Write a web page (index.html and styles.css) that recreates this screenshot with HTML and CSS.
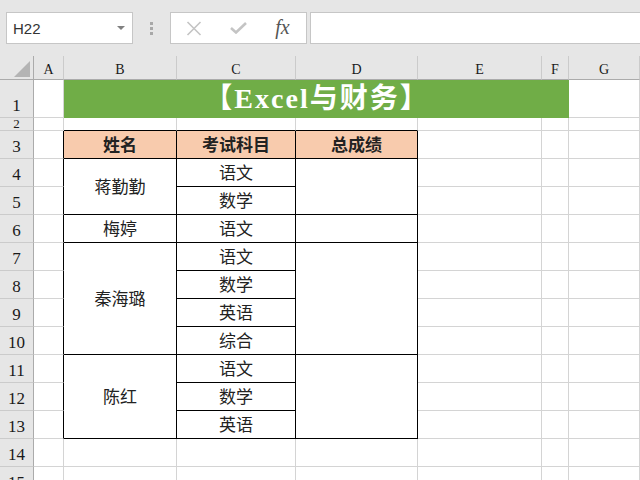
FILE: index.html
```html
<!DOCTYPE html>
<html lang="zh-CN">
<head>
<meta charset="utf-8">
<title>Excel与财务</title>
<link rel="stylesheet" href="styles.css">
</head>
<body>
<div class="app">
  <div class="toolbar">
    <div class="namebox"><span class="ref">H22</span><span class="caret"></span></div>
    <div class="grip"><i></i><i></i><i></i></div>
    <div class="btnbox">
      <div class="slot">
        <svg width="16" height="15" viewBox="0 0 16 15"><path d="M1.5 1 L14.5 14 M14.5 1 L1.5 14" stroke="#c4c4c4" stroke-width="1.6" fill="none"/></svg>
      </div>
      <div class="slot">
        <svg width="17" height="12" viewBox="0 0 17 12"><path d="M1 6 L6 10.5 L16 1" stroke="#c4c4c4" stroke-width="2.6" fill="none"/></svg>
      </div>
      <div class="slot"><span class="fx">fx</span></div>
    </div>
    <div class="formula"></div>
  </div>

  <div class="sheet">
    <div class="corner"><svg width="34" height="24" viewBox="0 0 34 24"><polygon points="14,21 30,21 30,5" fill="#b4b4b4"/></svg></div>
    <div class="ch">A</div><div class="ch">B</div><div class="ch">C</div><div class="ch">D</div><div class="ch">E</div><div class="ch">F</div><div class="ch">G</div>

    <div class="rh">1</div><div class="c"></div><div class="c title">【Excel与财务】</div><div class="c"></div>

    <div class="rh rh-thin">2</div><div class="c"></div><div class="c tt"></div><div class="c tt"></div><div class="c tt"></div><div class="c"></div><div class="c"></div><div class="c"></div>

    <div class="rh">3</div><div class="c tl"></div><div class="c tb hd">姓名</div><div class="c tb hd">考试科目</div><div class="c tb hd">总成绩</div><div class="c"></div><div class="c"></div><div class="c"></div>

    <div class="rh">4</div><div class="c tl"></div><div class="c tb r2">蒋勤勤</div><div class="c tb">语文</div><div class="c tb r2"></div><div class="c"></div><div class="c"></div><div class="c"></div>
    <div class="rh">5</div><div class="c tl"></div><div class="c tb">数学</div><div class="c"></div><div class="c"></div><div class="c"></div>

    <div class="rh">6</div><div class="c tl"></div><div class="c tb">梅婷</div><div class="c tb">语文</div><div class="c tb"></div><div class="c"></div><div class="c"></div><div class="c"></div>

    <div class="rh">7</div><div class="c tl"></div><div class="c tb r4">秦海璐</div><div class="c tb">语文</div><div class="c tb r4"></div><div class="c"></div><div class="c"></div><div class="c"></div>
    <div class="rh">8</div><div class="c tl"></div><div class="c tb">数学</div><div class="c"></div><div class="c"></div><div class="c"></div>
    <div class="rh">9</div><div class="c tl"></div><div class="c tb">英语</div><div class="c"></div><div class="c"></div><div class="c"></div>
    <div class="rh">10</div><div class="c tl"></div><div class="c tb">综合</div><div class="c"></div><div class="c"></div><div class="c"></div>

    <div class="rh">11</div><div class="c tl"></div><div class="c tb r3">陈红</div><div class="c tb">语文</div><div class="c tb r3"></div><div class="c"></div><div class="c"></div><div class="c"></div>
    <div class="rh">12</div><div class="c tl"></div><div class="c tb">数学</div><div class="c"></div><div class="c"></div><div class="c"></div>
    <div class="rh">13</div><div class="c tl"></div><div class="c tb">英语</div><div class="c"></div><div class="c"></div><div class="c"></div>

    <div class="rh">14</div><div class="c"></div><div class="c"></div><div class="c"></div><div class="c"></div><div class="c"></div><div class="c"></div><div class="c"></div>
    <div class="rh">15</div><div class="c"></div><div class="c"></div><div class="c"></div><div class="c"></div><div class="c"></div><div class="c"></div><div class="c"></div>
  </div>
</div>
</body>
</html>
```

FILE: styles.css
```css
* { box-sizing: border-box; }
html, body { margin: 0; padding: 0; }
body {
  width: 640px;
  height: 480px;
  overflow: hidden;
  background: #e6e6e6;
}
.app {
  width: 640px;
  height: 480px;
  overflow: hidden;
  display: flex;
  flex-direction: column;
}

/* toolbar */
.toolbar {
  height: 56px;
  flex: none;
  display: flex;
  align-items: flex-start;
  padding: 12px 0 0 6px;
  background: #e6e6e6;
  overflow: hidden;
}
.namebox {
  width: 127px;
  height: 32px;
  background: #fff;
  border: 1px solid #c6c6c6;
  display: flex;
  align-items: center;
  justify-content: space-between;
  padding: 0 7px 0 6px;
  flex: none;
}
.ref {
  font-family: "Liberation Sans", Arial, sans-serif;
  font-size: 15px;
  color: #333;
  padding-top: 1px;
}
.caret {
  width: 0;
  height: 0;
  border-left: 4px solid transparent;
  border-right: 4px solid transparent;
  border-top: 4px solid #808080;
}
.grip {
  width: 37px;
  height: 32px;
  flex: none;
  display: flex;
  flex-direction: column;
  align-items: center;
  justify-content: center;
  gap: 2px;
  padding-right: 1px;
}
.grip i {
  display: block;
  width: 3px;
  height: 3px;
  background: #a8a8a8;
}
.btnbox {
  width: 137px;
  height: 32px;
  flex: none;
  background: #fff;
  border: 1px solid #c6c6c6;
  display: grid;
  grid-template-columns: 45px 45px 1fr;
  align-items: center;
}
.slot {
  display: flex;
  align-items: center;
  justify-content: center;
}
.slot svg { display: block; }
.fx {
  font-family: "Liberation Serif", "Times New Roman", serif;
  font-style: italic;
  font-size: 20px;
  color: #555;
  line-height: 1;
  padding-bottom: 2px;
  padding-right: 2px;
}
.formula {
  margin-left: 3px;
  width: 340px;
  height: 32px;
  flex: none;
  background: #fff;
  border: 1px solid #c6c6c6;
}

/* sheet */
.sheet {
  flex: none;
  display: grid;
  grid-template-columns: 34px 30px 113px 119px 122px 124px 27px 1fr;
  grid-template-rows: 24px 38px 13px repeat(13, 28px);
  background: #fff;
}
.corner {
  background: #e6e6e6;
  border-right: 1px solid #ababab;
  border-bottom: 1px solid #ababab;
}
.corner svg { display: block; }
.ch {
  background: #e6e6e6;
  border-right: 1px solid #cbcbcb;
  border-bottom: 1px solid #ababab;
  font-family: "Liberation Serif", "Times New Roman", serif;
  font-size: 14px;
  color: #1a1a1a;
  display: flex;
  align-items: flex-end;
  justify-content: center;
  padding-bottom: 2px;
  line-height: 1;
}
.rh {
  background: #e6e6e6;
  border-right: 1px solid #ababab;
  border-bottom: 1px solid #cbcbcb;
  font-family: "Liberation Serif", "Times New Roman", serif;
  font-size: 17px;
  color: #1a1a1a;
  display: flex;
  align-items: flex-end;
  justify-content: center;
  padding-bottom: 3px;
  line-height: 1;
  overflow: hidden;
}
.rh-thin {
  font-size: 13px;
  padding-bottom: 0;
  line-height: 12px;
}
.c {
  border-right: 1px solid #d4d4d4;
  border-bottom: 1px solid #d4d4d4;
  font-family: "Liberation Serif", "Noto Sans CJK SC", serif;
  font-size: 17px;
  color: #222;
  display: flex;
  align-items: center;
  justify-content: center;
  padding-top: 2px;
  line-height: 1;
  overflow: hidden;
  white-space: nowrap;
}
.title {
  grid-column: span 5;
  background: #70ad47;
  border-right-color: #70ad47;
  border-bottom-color: #70ad47;
  color: #fff;
  font-weight: bold;
  font-size: 28px;
  letter-spacing: 2px;
  padding-top: 0;
  padding-left: 2px;
}
.tb {
  border-right-color: #000;
  border-bottom-color: #000;
}
.tl { border-right-color: #000; }
.tt { border-bottom-color: #000; }
.hd {
  background: #f8cbad;
  font-weight: bold;
}
.r2 { grid-row: span 2; }
.r3 { grid-row: span 3; }
.r4 { grid-row: span 4; }
```
